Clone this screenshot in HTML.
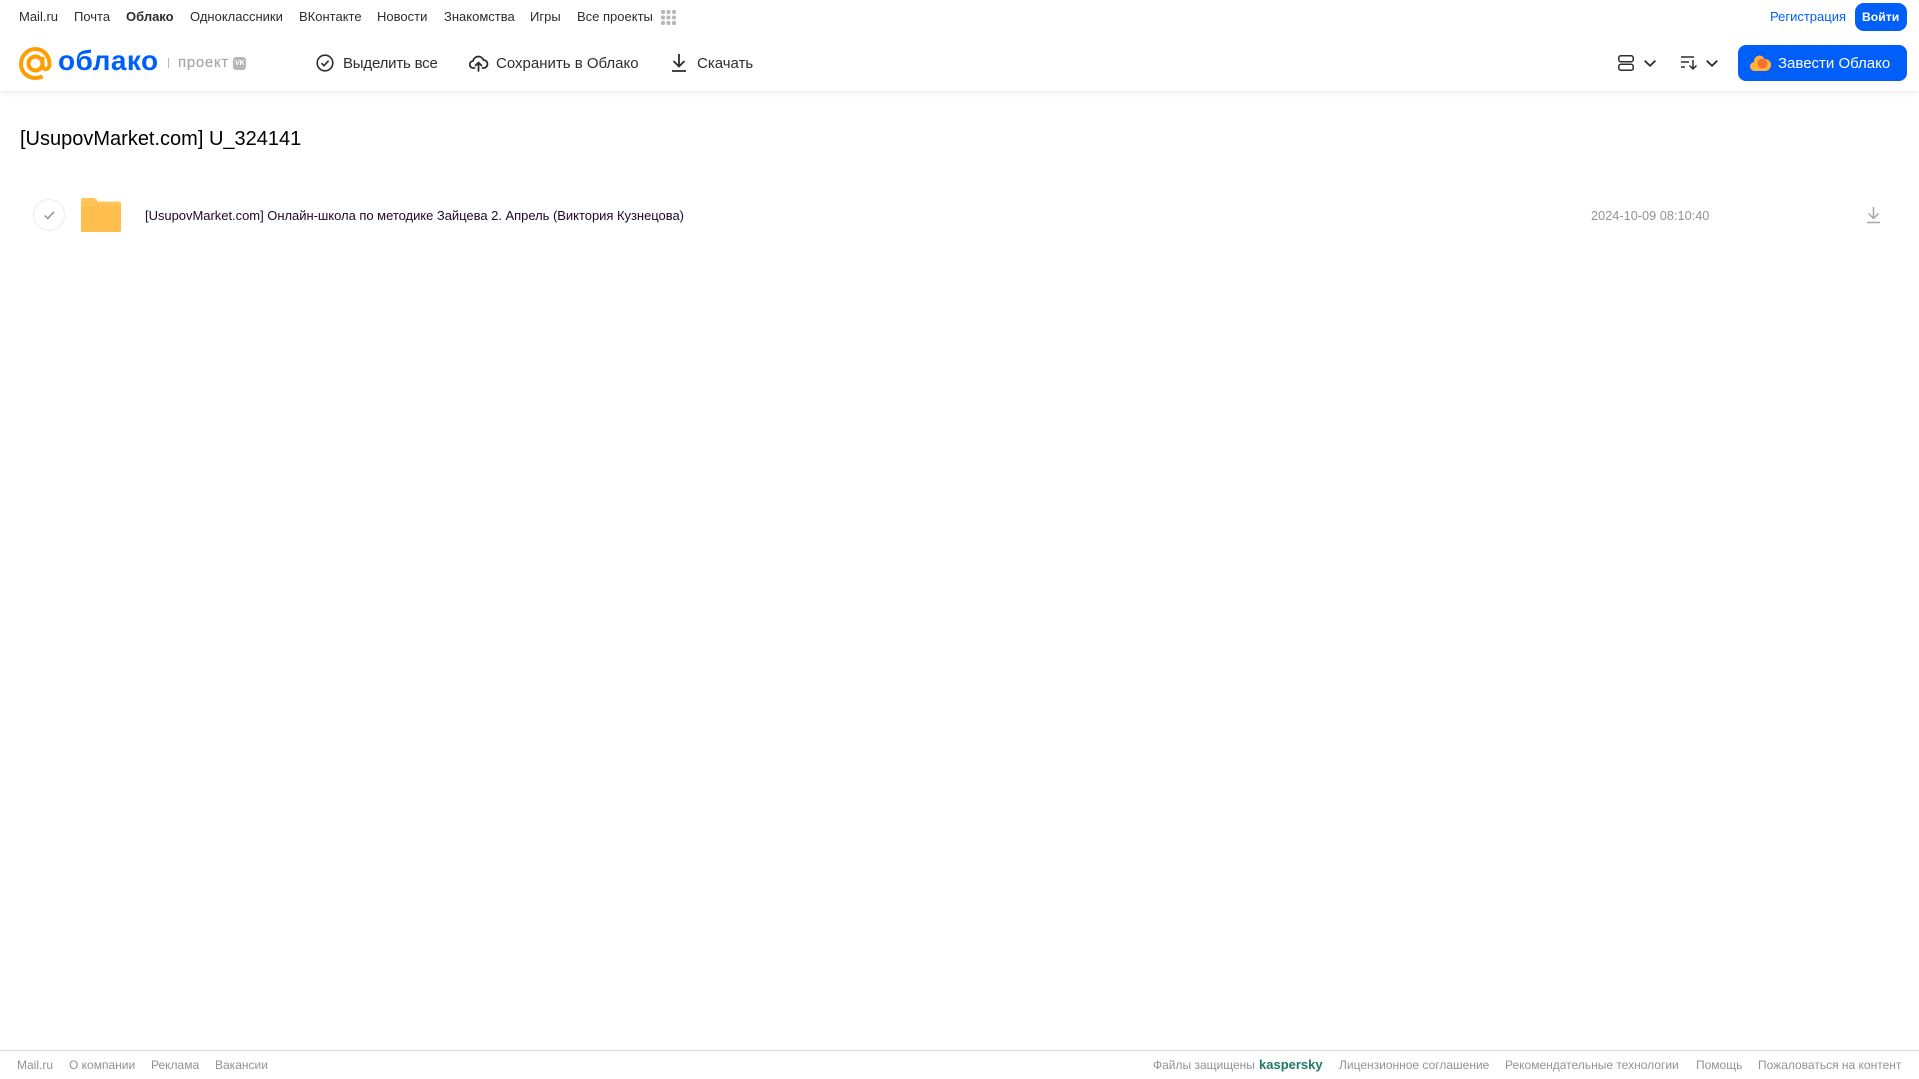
<!DOCTYPE html>
<html lang="ru"><head><meta charset="utf-8"><title>Облако</title>
<style>
html,body{margin:0;padding:0;width:1919px;height:1079px;overflow:hidden;background:#fff;font-family:"Liberation Sans",sans-serif}
.t{position:absolute;white-space:nowrap;line-height:1}
.n{top:10px;font-size:13px;color:#2c2d2e}
.b{top:56px;font-size:15px;color:#2c2d2e}
.f{top:1059px;font-size:12px;color:#919399}
svg{position:absolute;overflow:visible}
.hd{position:absolute;left:0;top:0;width:1919px;height:91px;background:#fff;box-shadow:0 1px 0 #f2f2f2,0 3px 6px rgba(0,0,0,.05)}
</style></head><body>
<div class="hd"></div>
<span class="t n" style="left:19px">Mail.ru</span>
<span class="t n" style="left:74px">Почта</span>
<span class="t n" style="left:126px;font-weight:bold">Облако</span>
<span class="t n" style="left:190px">Одноклассники</span>
<span class="t n" style="left:299px">ВКонтакте</span>
<span class="t n" style="left:377px">Новости</span>
<span class="t n" style="left:444px">Знакомства</span>
<span class="t n" style="left:530px">Игры</span>
<span class="t n" style="left:577px">Все проекты</span>
<svg style="left:661px;top:10px" width="15" height="15" fill="#b5b7bb"><rect x="0" y="0" width="4" height="4" rx="1.500"/><rect x="5.500" y="0" width="4" height="4" rx="1.500"/><rect x="11" y="0" width="4" height="4" rx="1.500"/><rect x="0" y="5.500" width="4" height="4" rx="1.500"/><rect x="5.500" y="5.500" width="4" height="4" rx="1.500"/><rect x="11" y="5.500" width="4" height="4" rx="1.500"/><rect x="0" y="11" width="4" height="4" rx="1.500"/><rect x="5.500" y="11" width="4" height="4" rx="1.500"/><rect x="11" y="11" width="4" height="4" rx="1.500"/></svg>
<span class="t n" style="left:1770px;color:#005ff9">Регистрация</span>
<div style="position:absolute;left:1855px;top:3px;width:52px;height:28px;background:#005ff9;border-radius:9px"></div>
<span class="t" style="left:1862px;top:11px;color:#fff;font-weight:bold;font-size:12.200px">Войти</span>

<svg style="left:19px;top:47px" width="33" height="33" viewBox="0 0 33 33" fill="none" stroke="#ff9e00" stroke-width="4"><circle cx="16.500" cy="16.500" r="7"/><path d="M23.500 10v8.500c0 5 7 5 7-1.500 0-8-6-15-14-15S2 9 2 17s6.500 14 14.500 14c2.500 0 5-.6 7-1.700"/></svg>
<span class="t" style="left:58px;top:47px;font-size:28px;font-weight:bold;color:#005ff9;letter-spacing:.45px">облако</span>
<div style="position:absolute;left:168px;top:58px;width:1px;height:10px;background:#b5b7bb"></div>
<span class="t" style="left:178px;top:55px;font-size:15px;color:#a5a7ab;letter-spacing:.7px;-webkit-text-stroke:.2px #a5a7ab">проект</span>
<div style="position:absolute;left:233px;top:57px;width:13px;height:13px;background:#b5b7bb;border-radius:3px"></div>
<span class="t" style="left:235px;top:60px;font-size:7px;font-weight:bold;color:#fff">VK</span>

<svg style="left:316px;top:54px" width="18" height="18" fill="none" stroke="#2c2d2e" stroke-width="1.600"><circle cx="9" cy="9" r="7.800"/><path d="M5.500 9.200l2.500 2.500 4.600-5"/></svg>
<span class="t b" style="left:343px;letter-spacing:-.2px">Выделить все</span>
<svg style="left:469px;top:54px" width="19" height="18" fill="none" stroke="#2c2d2e" stroke-width="1.800" stroke-linecap="round" stroke-linejoin="round"><path d="M5.500 14H4.500a3.500 3.500 0 0 1-.5-7A5.500 5.500 0 0 1 14.500 6a4 4 0 0 1 0 8h-1"/><path d="M9.500 17V9M6.500 11.500l3-3 3 3"/></svg>
<span class="t b" style="left:496px">Сохранить в Облако</span>
<svg style="left:672px;top:54px" width="14" height="18" fill="none" stroke="#2c2d2e" stroke-width="1.800"><path d="M7 0v12M1.500 7l5.500 5.500L12.500 7M0 17h14"/></svg>
<span class="t b" style="left:697px">Скачать</span>

<svg style="left:1618px;top:55px" width="16" height="16" fill="none" stroke="#2c2d2e" stroke-width="1.500"><rect x=".8" y=".8" width="14.400" height="5.900" rx="2"/><rect x=".8" y="9.300" width="14.400" height="5.900" rx="2"/></svg>
<svg style="left:1644px;top:60px" width="12" height="7" fill="none" stroke="#2c2d2e" stroke-width="1.800"><path d="M.7.700L6 5.800 11.300.700"/></svg>
<svg style="left:1681px;top:56px" width="16" height="14" fill="none" stroke="#2c2d2e" stroke-width="1.500"><path d="M0 1h13M0 6h8M0 11h4M12 4v9M8.500 9.500l3.500 3.500 3.500-3.500"/></svg>
<svg style="left:1706px;top:60px" width="12" height="7" fill="none" stroke="#2c2d2e" stroke-width="1.800"><path d="M.7.700L6 5.800 11.300.700"/></svg>

<div style="position:absolute;left:1738px;top:45px;width:169px;height:36px;background:#005ff9;border-radius:8px"></div>
<svg style="left:1750px;top:54px" width="20" height="17"><path d="M5 17a4.500 4.500 0 0 1-1-9A5.500 5.500 0 0 1 14.500 5a6 6 0 0 1 1 12z" fill="#ffb23e"/><circle cx="12.500" cy="9.500" r="5" fill="#f4702c"/></svg>
<span class="t b" style="left:1778px;color:#fff">Завести Облако</span>

<span class="t" style="left:20px;top:129px;font-size:20px;color:#000">[UsupovMarket.com] U_324141</span>

<div style="position:absolute;left:33px;top:199px;width:30px;height:30px;border:1px solid #ececee;border-radius:50%"></div>
<svg style="left:44px;top:211px" width="11" height="9" fill="none" stroke="#919399" stroke-width="1.500"><path d="M.7 4.500l3 3L10 .8"/></svg>
<svg style="left:81px;top:198px" width="40" height="34"><path d="M2 0h10c2.500 0 3.500 1 5 3.500h21a2 2 0 0 1 2 2V32a2 2 0 0 1-2 2H2a2 2 0 0 1-2-2V2a2 2 0 0 1 2-2z" fill="#ffc559"/><path d="M0 8h40v24a2 2 0 0 1-2 2H2a2 2 0 0 1-2-2z" fill="#ffbe4d"/></svg>
<span class="t" style="left:145px;top:209px;font-size:13px;color:#1b0a2a;letter-spacing:-.03px">[UsupovMarket.com] Онлайн-школа по методике Зайцева 2. Апрель (Виктория Кузнецова)</span>
<span class="t" style="left:1591px;top:210px;font-size:12.750px;color:#919399">2024-10-09 08:10:40</span>
<svg style="left:1867px;top:206px" width="13" height="18" fill="none" stroke="#a5a7ab" stroke-width="1.500"><path d="M6.500 1v11M1.500 7.500l5 5 5-5M0 16.500h13"/></svg>

<div style="position:absolute;left:0;top:1050px;width:1919px;height:1px;background:#dcdcde"></div>
<span class="t f" style="left:17px">Mail.ru</span>
<span class="t f" style="left:69px">О компании</span>
<span class="t f" style="left:151px">Реклама</span>
<span class="t f" style="left:215px">Вакансии</span>
<span class="t f" style="left:1153px">Файлы защищены</span>
<span class="t f" style="left:1259px;top:1058px;font-size:13px;font-weight:bold;color:#1d7a65">kaspersky</span>
<span class="t f" style="left:1339px">Лицензионное соглашение</span>
<span class="t f" style="left:1505px">Рекомендательные технологии</span>
<span class="t f" style="left:1696px">Помощь</span>
<span class="t f" style="left:1758px">Пожаловаться на контент</span>
</body></html>
